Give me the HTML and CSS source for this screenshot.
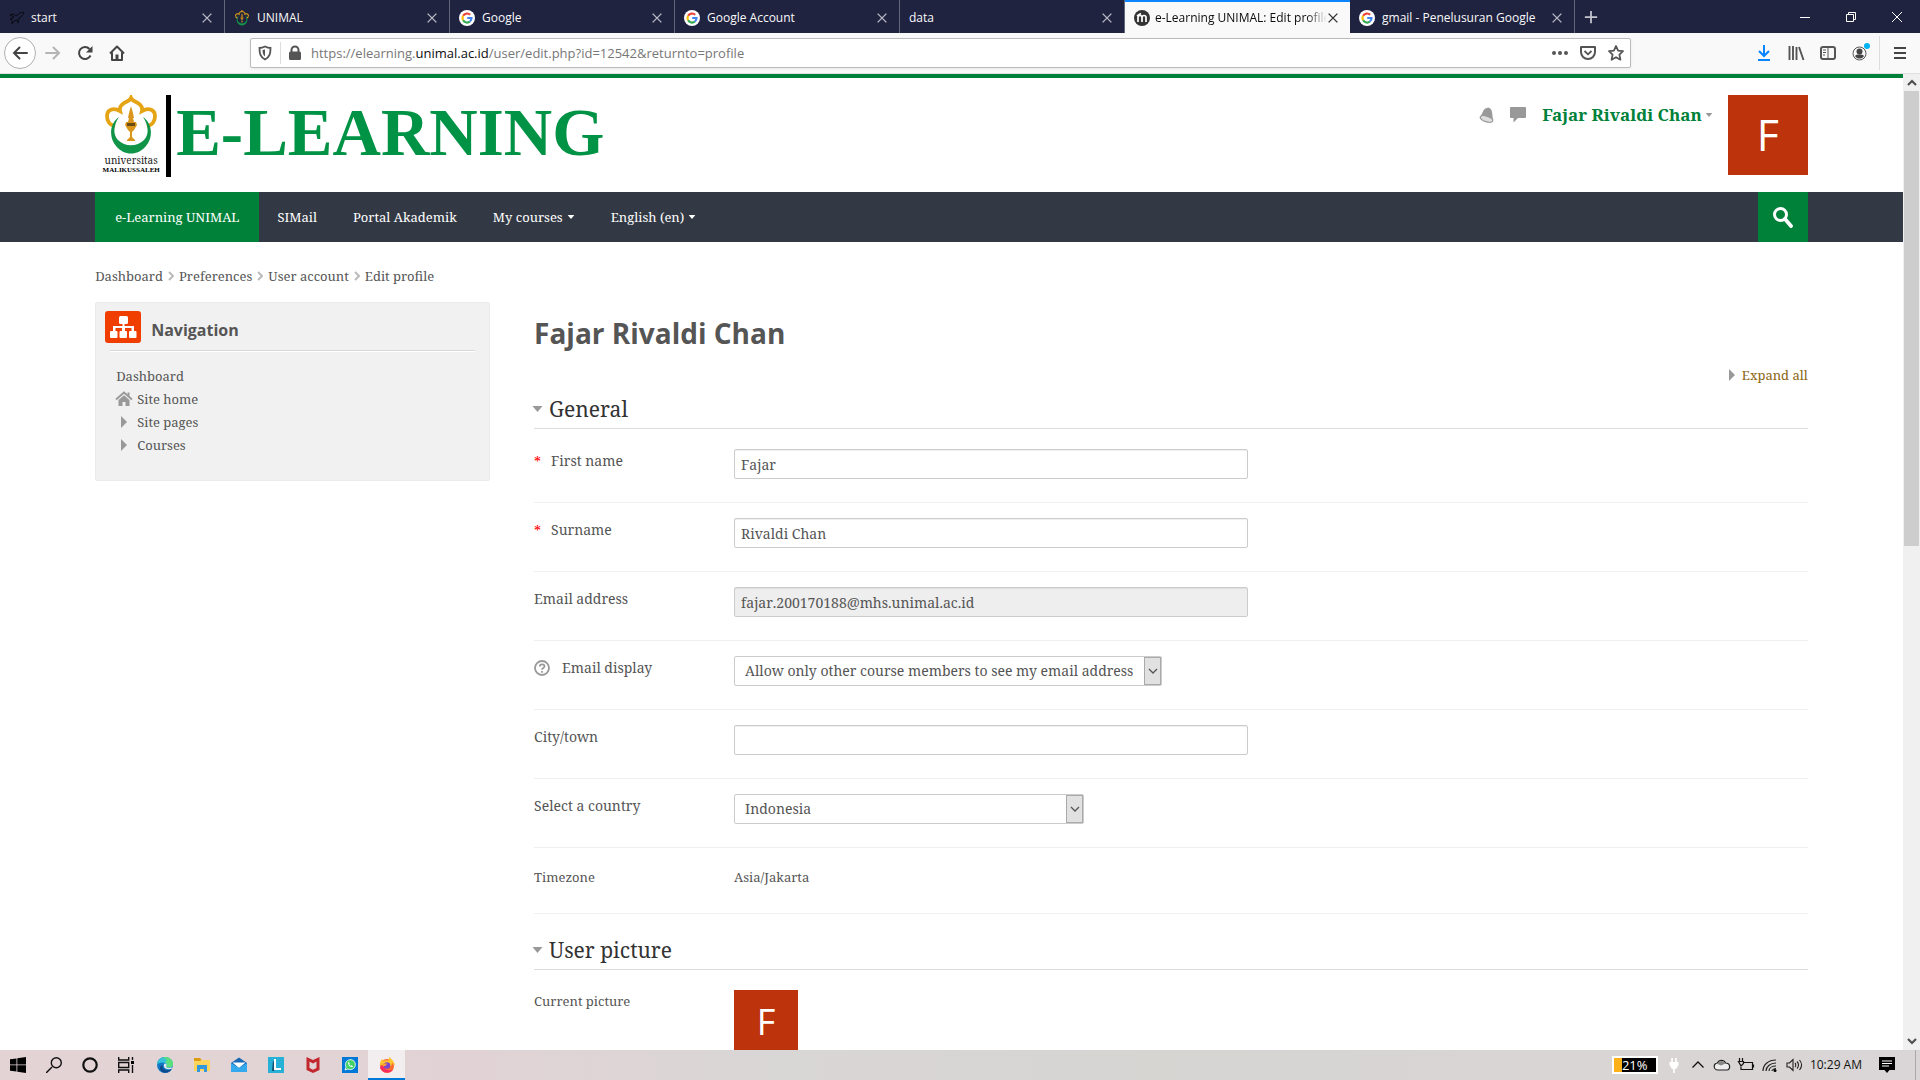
FILE: index.html
```html
<!DOCTYPE html>
<html lang="en">
<head>
<meta charset="utf-8">
<title>e-Learning UNIMAL: Edit profile</title>
<link rel="stylesheet" href="styles.css">
</head>
<body>
<svg class="defs" aria-hidden="true">
  <symbol id="close" viewBox="0 0 16 16"><path d="M3 3l10 10M13 3L3 13" fill="none" stroke="currentColor" stroke-width="1.6"/></symbol>
  <symbol id="google" viewBox="0 0 16 16"><circle cx="8" cy="8" r="8" fill="#fff"/><g fill="none" stroke-width="2.2"><path d="M11.2 4.8A4.5 4.5 0 0 0 4.1 5.8" stroke="#ea4335"/><path d="M4.1 5.8a4.5 4.5 0 0 0 0 4.5" stroke="#fbbc05"/><path d="M4.1 10.3a4.5 4.5 0 0 0 6.8 1.2" stroke="#34a853"/><path d="M10.9 11.5A4.4 4.4 0 0 0 12.5 8H8.2" stroke="#4285f4"/></g></symbol>
  <symbol id="emblem" viewBox="0 0 54 60">
    <path d="M11 31C5 30 3 25 3 21c0-6 6-9 13-5-1-4 1-6 4-8 3-1.500 6-2.500 7-5 1 2.500 4 3.500 7 5 3 2 5 4 4 8 7-4 13-1 13 5 0 4-2 9-8 10" fill="none" stroke="#e5a413" stroke-width="3.800"/>
    <path d="M15 22C5 29 5 43 12 51c8 10 22 10 30 0 7-8 7-22-3-29 6 9 6 18 1 23-7 7-19 7-26 0-5-5-5-14 1-23z" fill="#109447"/>
    <path d="M27 11l2 7 1 5h-1l1 4h2l1 3-3 5-2 2v5l3 3v1h-8v-1l3-3v-5l-2-2-3-5 1-3h2l1-4h-1l1-5z" fill="#d9961b"/>
    <path d="M23 28h8v3h-8z" fill="#694b17"/>
  </symbol>
  <symbol id="down" viewBox="0 0 10 6"><path d="M0 0h10L5 6z" fill="currentColor"/></symbol>
  <symbol id="right" viewBox="0 0 6 12"><path d="M0 0l6 6-6 6z" fill="currentColor"/></symbol>
  <symbol id="chev" viewBox="0 0 10 10"><path d="M1 3l4 4 4-4" fill="none" stroke="currentColor" stroke-width="1.300"/></symbol>
  <symbol id="bold-chev" viewBox="0 0 10 10"><path d="M1 3l4 4 4-4" fill="none" stroke="currentColor" stroke-width="2.200"/></symbol>
  <symbol id="sep" viewBox="0 0 6 10"><path d="M1 1l4 4-4 4" fill="none" stroke="#bbb" stroke-width="2"/></symbol>
</svg>

<div class="browser">
  <div class="tabs">
    <div class="tab tab-first"><svg class="fav" viewBox="0 0 16 16"><path d="M1 5l3-1 3 2 4-3 3-1 1 1-3 4-2 1-1 5-1-3-3 1-2 3v-4l-2-1 3-1 1-1z" fill="none" stroke="#090a12"/></svg><span class="tab-title">start</span><button class="tab-close" aria-label="Close tab"><svg><use href="#close"/></svg></button></div>
    <div class="tab"><svg class="fav"><use href="#emblem"/></svg><span class="tab-title">UNIMAL</span><button class="tab-close" aria-label="Close tab"><svg><use href="#close"/></svg></button></div>
    <div class="tab"><svg class="fav"><use href="#google"/></svg><span class="tab-title">Google</span><button class="tab-close" aria-label="Close tab"><svg><use href="#close"/></svg></button></div>
    <div class="tab"><svg class="fav"><use href="#google"/></svg><span class="tab-title">Google Account</span><button class="tab-close" aria-label="Close tab"><svg><use href="#close"/></svg></button></div>
    <div class="tab"><span class="tab-title">data</span><button class="tab-close" aria-label="Close tab"><svg><use href="#close"/></svg></button></div>
    <div class="tab tab-active"><svg class="fav" viewBox="0 0 16 16"><circle cx="8" cy="8" r="8" fill="#333"/><path d="M4 12V7.500a2 2 0 0 1 4 0V12M8 7.500a2 2 0 0 1 4 0V12M3 6l4-2.500" fill="none" stroke="#fff" stroke-width="1.700"/></svg><span class="tab-title">e-Learning UNIMAL: Edit profile</span><button class="tab-close" aria-label="Close tab"><svg><use href="#close"/></svg></button></div>
    <div class="tab"><svg class="fav"><use href="#google"/></svg><span class="tab-title">gmail - Penelusuran Google</span><button class="tab-close" aria-label="Close tab"><svg><use href="#close"/></svg></button></div>
    <button class="new-tab" aria-label="New tab"><svg viewBox="0 0 16 16"><path d="M8 1v14M1 8h14" stroke="currentColor" stroke-width="2"/></svg></button>
    <div class="window-buttons">
      <button aria-label="Minimize"><svg viewBox="0 0 12 12"><path d="M1 6.500h10" stroke="#fff"/></svg></button>
      <button aria-label="Restore"><svg viewBox="0 0 12 12"><path d="M1.500 3.500h7v7h-7zM3.500 3V1.500h7v7H9" fill="none" stroke="#fff"/></svg></button>
      <button aria-label="Close"><svg viewBox="0 0 12 12"><path d="M1 1l10 10M11 1L1 11" stroke="#fff"/></svg></button>
    </div>
  </div>
  <div class="toolbar">
    <button class="tool back" aria-label="Back"><svg viewBox="0 0 16 16"><path d="M15 8H2M7.500 2.500L2 8l5.500 5.500" fill="none" stroke="#444" stroke-width="2" stroke-linecap="round"/></svg></button>
    <button class="tool" aria-label="Forward"><svg viewBox="0 0 16 16"><path d="M1 8h13M8.500 2.500L14 8l-5.500 5.500" fill="none" stroke="#b5b5b5" stroke-width="2" stroke-linecap="round"/></svg></button>
    <button class="tool" aria-label="Reload"><svg viewBox="0 0 16 16"><path d="M13.500 10.500A6 6 0 1 1 12.500 4" fill="none" stroke="#444" stroke-width="2"/><path d="M15.500 1v6.500H9z" fill="#444"/></svg></button>
    <button class="tool" aria-label="Home"><svg viewBox="0 0 16 16"><path d="M1 8.500L8 1.500l7 7M3 7.500V15h10V7.500" fill="none" stroke="#444" stroke-width="2" stroke-linejoin="round"/><path d="M6.500 15V9.500h3V15z" fill="#444"/></svg></button>
    <div class="address">
      <svg class="i16" viewBox="0 0 16 16"><path d="M8 1.500C6 2.500 4 3 2.500 3c0 5 .5 9 5.500 11.500C13 12 13.500 8 13.500 3 12 3 10 2.500 8 1.500z" fill="none" stroke="#555" stroke-width="1.800"/><path d="M8 4.500v7C6 10 5.500 8 5.500 5z" fill="#555"/></svg>
      <span class="divider"></span>
      <svg class="i16" viewBox="0 0 16 16"><path d="M4.500 7V5a3.500 3.500 0 0 1 7 0v2" fill="none" stroke="#555" stroke-width="2"/><rect x="2" y="6.500" width="12" height="8.500" rx="1.500" fill="#555"/></svg>
      <span class="url">https://elearning.<b>unimal.ac.id</b>/user/edit.php?id=12542&amp;returnto=profile</span>
      <svg class="i16" viewBox="0 0 16 16"><g fill="#555"><circle cx="2" cy="8" r="2"/><circle cx="8" cy="8" r="2"/><circle cx="14" cy="8" r="2"/></g></svg>
      <svg class="i16" viewBox="0 0 16 16"><path d="M1 2h14v5a7 7 0 0 1-14 0z" fill="none" stroke="#555" stroke-width="2" stroke-linejoin="round"/><path d="M4.500 6L8 9.300 11.500 6" fill="none" stroke="#555" stroke-width="1.800"/></svg>
      <svg class="i16" viewBox="0 0 16 16"><path d="M8 1l2.100 4.600 4.900.6-3.600 3.400 1 5.100L8 12.200l-4.400 2.500 1-5.100L1 6.200l4.900-.6z" fill="none" stroke="#555" stroke-width="1.800" stroke-linejoin="round"/></svg>
    </div>
    <div class="tools-right">
      <svg class="i16" viewBox="0 0 16 16"><path d="M8 0v11M3 6l5 5 5-5M2 15h12" fill="none" stroke="#0a84ff" stroke-width="2"/></svg>
      <svg class="i16" viewBox="0 0 16 16"><path d="M1.500 1v14M5 1v14M8.500 2v13M11 2l4.500 13" fill="none" stroke="#555" stroke-width="1.900"/></svg>
      <svg class="i16" viewBox="0 0 16 16"><rect x="1" y="2" width="14" height="12" rx="2" fill="none" stroke="#555" stroke-width="2"/><path d="M8 2v12M3 5h3M3 7.500h3M3 10h2" stroke="#555"/></svg>
      <svg class="i16" viewBox="0 0 16 16"><circle cx="7.500" cy="8.500" r="6.500" fill="none" stroke="#555"/><circle cx="7.500" cy="6.500" r="3" fill="#444"/><path d="M3 11c1-1.500 2-1.500 4.500-1.500S11 9.500 12 11c-1 2-3 2.500-4.500 2.500S4 13 3 11z" fill="#444"/><circle cx="15" cy="1" r="3" fill="#00b3f4"/></svg>
      <span class="divider tall"></span>
      <svg class="i16" viewBox="0 0 16 16"><path d="M2 3h12M2 8h12M2 13h12" stroke="#444" stroke-width="2"/></svg>
    </div>
  </div>
</div>

<div class="viewport">
  <div class="page">
    <header class="site-header wrap">
      <a class="logo" href="#"><span class="crest"><svg><use href="#emblem"/></svg><span class="crest-a">universitas</span><span class="crest-b">MALIKUSSALEH</span></span><span class="logo-text">E-LEARNING</span></a>
      <div class="user">
        <svg class="i16" viewBox="0 0 16 16"><path d="M1 10.500C5 8 4 2 9 1c1-1 2-.5 2.300 0C15 2.500 14 8 15 13c-1-1-3-3-6-3.500-3-.5-6 0-8 1z" fill="#999"/><ellipse cx="8.500" cy="12" rx="6.500" ry="2.800" transform="rotate(17 8.500 12)" fill="#ddd" stroke="#999" stroke-width="1.200"/></svg>
        <svg class="i16" viewBox="0 0 16 16"><path d="M1 0h14a1 1 0 0 1 1 1v9a1 1 0 0 1-1 1H8l-4.500 4.500V11H1a1 1 0 0 1-1-1V1a1 1 0 0 1 1-1z" fill="#999"/></svg>
        <a class="user-name" href="#">Fajar Rivaldi Chan<svg class="caret"><use href="#down"/></svg></a>
      </div>
      <div class="avatar">F</div>
    </header>
    <nav class="navbar"><div class="wrap nav-row">
      <a class="home" href="#">e-Learning UNIMAL</a><a href="#">SIMail</a><a href="#">Portal Akademik</a><a href="#">My courses<svg class="caret"><use href="#down"/></svg></a><a href="#">English (en)<svg class="caret"><use href="#down"/></svg></a>
      <button class="search" aria-label="Search"><svg viewBox="0 0 22 22"><circle cx="8.500" cy="8.500" r="6" fill="none" stroke="#fff" stroke-width="3"/><path d="M13 13l6 7" stroke="#fff" stroke-width="3.800" stroke-linecap="round"/></svg></button>
    </div></nav>
    <div class="wrap">
      <nav class="crumbs"><a href="#">Dashboard</a><svg><use href="#sep"/></svg><a href="#">Preferences</a><svg><use href="#sep"/></svg><a href="#">User account</a><svg><use href="#sep"/></svg><a href="#">Edit profile</a></nav>
      <div class="columns">
        <aside class="block">
          <h2><svg viewBox="0 0 36 32"><rect width="36" height="32" rx="3" fill="#ef3e00"/><g fill="#fff"><rect x="14" y="5" width="9" height="8" rx="1.500"/><path d="M17.500 12h2v3h9v2h-20v-2h9z"/><path d="M8 15h2.500v5H8zM17 15h3v5h-3zM26.500 15H29v5h-2.500z"/><rect x="5" y="20" width="7.500" height="7" rx="1"/><rect x="14.500" y="20" width="7.500" height="7" rx="1"/><rect x="24" y="20" width="7.500" height="7" rx="1"/></g></svg>Navigation</h2>
          <ul>
            <li><a href="#">Dashboard</a></li>
            <li><span class="tree-icon"><svg class="i16" viewBox="0 0 16 16"><path d="M0 8.500L8 1.500l8 7" fill="none" stroke="#999" stroke-width="1.800"/><path d="M11.500 1.500h2v4l-2-1.700zM2.500 9L8 4.300 13.500 9v6H9.500v-4h-3v4h-4z" fill="#999"/></svg></span><a href="#">Site home</a></li>
            <li><span class="tree-icon"><svg class="arrow"><use href="#right"/></svg></span><a href="#">Site pages</a></li>
            <li><span class="tree-icon"><svg class="arrow"><use href="#right"/></svg></span><a href="#">Courses</a></li>
          </ul>
        </aside>
        <main>
          <h1>Fajar Rivaldi Chan</h1>
          <div class="expand"><a href="#"><svg class="arrow"><use href="#right"/></svg>Expand all</a></div>
          <form>
            <h3><svg class="toggle"><use href="#down"/></svg>General</h3>
            <div class="row first"><label for="fn"><span class="req">*</span>First name</label><input id="fn" type="text" value="Fajar"></div>
            <div class="row"><label for="sn"><span class="req">*</span>Surname</label><input id="sn" type="text" value="Rivaldi Chan"></div>
            <div class="row"><label for="em">Email address</label><input id="em" type="text" value="fajar.200170188@mhs.unimal.ac.id" readonly></div>
            <div class="row"><label for="ed"><svg class="help" viewBox="0 0 16 16"><circle cx="8" cy="8" r="7" fill="none" stroke="#999" stroke-width="1.800"/><path d="M5.800 6.500C5.800 3.500 10.500 3.700 10.500 6.300 10.500 8 8 8 8 9.700M8 11v1.800" fill="none" stroke="#999" stroke-width="1.800"/></svg>Email display</label><div class="select wide"><select id="ed"><option>Allow only other course members to see my email address</option></select><span><svg><use href="#chev"/></svg></span></div></div>
            <div class="row"><label for="ct">City/town</label><input id="ct" type="text"></div>
            <div class="row"><label for="co">Select a country</label><div class="select"><select id="co"><option>Indonesia</option></select><span><svg><use href="#chev"/></svg></span></div></div>
            <div class="row static"><span class="label">Timezone</span><span class="label">Asia/Jakarta</span></div>
            <h3 class="second"><svg class="toggle"><use href="#down"/></svg>User picture</h3>
            <div class="row picture"><span class="label">Current picture</span><div class="avatar small">F</div></div>
          </form>
        </main>
      </div>
    </div>
  </div>
  <div class="scrollbar"><svg class="up"><use href="#bold-chev"/></svg><div class="thumb"></div><svg class="end"><use href="#bold-chev"/></svg></div>
</div>

<footer class="taskbar">
  <button aria-label="Start"><svg viewBox="0 0 16 16"><path d="M0 2.300l6.500-.9v6.100H0zM7.300 1.300L16 0v7.500H7.300zM0 8.300h6.500v6.300L0 13.700zM7.300 8.300H16V16l-8.700-1.300z"/></svg></button>
  <button aria-label="Search"><svg viewBox="0 0 16 16"><path d="M0 16l6-6" stroke="#111" stroke-width="1.500"/><circle cx="10.300" cy="5.700" r="5" fill="none" stroke="#111" stroke-width="1.400"/></svg></button>
  <button aria-label="Cortana"><svg viewBox="0 0 16 16"><circle cx="8" cy="8" r="6.700" fill="none" stroke="#111" stroke-width="2.200"/></svg></button>
  <button aria-label="Task view"><svg viewBox="0 0 16 16"><path d="M.7 0v3h10V0M.7 16v-3h10v3M.7 5.500h10v5H.7zM14.500 0v3M14.500 8v8" fill="none" stroke="#111" stroke-width="1.400"/><path d="M13 4h3v3h-3z"/></svg></button>
  <div class="apps">
  <button class="app" aria-label="Edge"><svg viewBox="0 0 16 16"><circle cx="8" cy="8" r="8" fill="#1176c4"/><path d="M0 7C1-1 11-2 15 4c3 5-2 8-6 6 1-1 1-3-1-4C5 4.500 1 6 0 8z" fill="#35c1d8"/><path d="M8 0c6 0 9 5 8 8-1 3-5 3-7 2 2-2 1-4-1-5 3-1 2-4-3-4z" fill="#5dde7d"/><path d="M5.500 8C5 13 10 14 14.500 12.500 12 16 7 17 4 14 2 11 3 8.500 5.500 8z" fill="#0c4a8c"/><path d="M8 6.500c2 0 2 2 1 3.500 2 1.500 5 1 6.500 0l.3 1c-4 2.500-9 1-9-2 0-1.500.5-2.300 1.200-2.500z" fill="#e3e9ee"/></svg></button>
  <button class="app" aria-label="Explorer"><svg viewBox="0 0 16 16"><path d="M0 1h6l1.500 2H16v11H0z" fill="#ffd45d"/><path d="M0 1h6l1.500 2L6 4H0z" fill="#dc9b12"/><path d="M3 8h10v7h-3v-3H6v3H3z" fill="#3297dd"/></svg></button>
  <button class="app" aria-label="Mail"><svg viewBox="0 0 16 16"><path d="M0 6l8-5.500L16 6v9H0z" fill="#1769b5"/><path d="M1.500 5.500h13L8 11z" fill="#fff"/><path d="M0 6l8 5 8-5v9H0z" fill="#35a9ed"/></svg></button>
  <button class="app" aria-label="L"><svg viewBox="0 0 16 16"><path d="M0 0h16v16H0z" fill="#27b1d6"/><path d="M5 3l-1 11h2l2-3z" fill="#125275"/><path d="M6 2h2v9h5v2H6z" fill="#fff"/></svg></button>
  <button class="app" aria-label="McAfee"><svg viewBox="0 0 16 16"><path d="M1.500 0L8 3l6.500-3v13L8 16l-6.500-3zM4.500 4.500v6.500L8 12.700l3.500-1.700V4.500L8 6.500z" fill="#c1272d" fill-rule="evenodd"/></svg></button>
  <button class="app" aria-label="WhatsApp"><svg viewBox="0 0 16 16"><path d="M0 0h16v16H0z" fill="#0078d7"/><path d="M3 13l1-3a5 5 0 1 1 2 2z" fill="#42d366" stroke="#fff" stroke-width=".8"/><path d="M6 5.500c0 3 2 4.500 4.300 4.800l.7-1-1.500-1-.8.600L7.200 7.500l.4-1L7 5z" fill="#fff"/></svg></button>
  <button class="app current" aria-label="Firefox"><svg viewBox="0 0 16 16"><circle cx="8" cy="9" r="7" fill="#ff6b2c"/><path d="M1 8c0-3 1-5 2-6l1 2c2-1 4-1 5 0C9 2 10 1 11 0c1 3 5 4 5 9-1-2-2-3-3-3 0 5-6 6-9 2z" fill="#ffc52e"/><path d="M1 10c1 5 8 8 13 3-4 1-9 0-10-5z" fill="#f72d62"/><circle cx="8" cy="8.500" r="3.300" fill="#7946cf"/><path d="M3 6.500h5l-1 2-3 1z" fill="#ffa22b"/></svg></button>
  </div>
  <div class="tray">
    <span class="battery">21%</span>
    <svg class="i16" viewBox="0 0 16 16"><path d="M6 1v4M10 1v4M8 11v5" stroke="#fff" stroke-width="1.600"/><path d="M3.500 5h9v3L10 12H6L3.500 8z" fill="#fff"/></svg>
    <svg class="i16" viewBox="0 0 16 16"><path d="M2.500 10.500L8 5l5.500 5.500" fill="none" stroke="#111" stroke-width="1.300"/></svg>
    <svg class="i16" viewBox="0 0 16 16"><path d="M4 13a3.500 3.500 0 0 1-.5-7C5 2.500 10 2.500 11.500 6 17 6 16.500 13 13 13z" fill="#eee" stroke="#222" stroke-width="1.200"/><path d="M3.500 7C5 3 10 3 11.500 6.500L7 8.500z" fill="#888"/></svg>
    <svg class="i16" viewBox="0 0 16 16"><path d="M5 5.500h9.500v7H5M15.500 7.500v3M1.500 1v3M4.500 1v3M.5 4.500h5v2L3 9zM3 8v4.500h2" fill="none" stroke="#111" stroke-width="1.200"/></svg>
    <svg class="i16" viewBox="0 0 16 16"><g fill="none" stroke="#222" stroke-width="1.200"><path d="M1 14C1 8 6 3 14 3M4 14c0-4 4-8 10-8M7 14c0-3 3-5 7-5M10 14c0-1 2-2.500 4-2.500"/></g><circle cx="13" cy="13.500" r="1.500"/></svg>
    <svg class="i16" viewBox="0 0 16 16"><path d="M1 6h2.500L7 2.500v11L3.500 10H1zM9 6c1 1 1 3 0 4M11 4.500c2 2 2 5 0 7M13.500 3c2.500 3 2.500 7 0 10" fill="none" stroke="#222" stroke-width="1.100"/></svg>
    <span class="clock">10:29 AM</span>
    <svg class="i16 notice" viewBox="0 0 16 16"><path d="M0 0h16v13H10.500L8 16l-2.500-3H0z"/><path d="M3 4h10M3 6.500h10M3 9h7" stroke="#fff"/></svg>
  </div>
  <span class="show-desktop"></span>
</footer>
</body>
</html>
```
FILE: styles.css
```css
* { box-sizing: border-box; }
body { margin: 0; height: 100vh; display: flex; flex-direction: column; overflow: hidden; background: #fff; color: #555; font: 13px/20px "Noto Serif", "Liberation Serif", serif; }
a { color: inherit; text-decoration: none; }
button { padding: 0; border: 0; background: none; display: flex; align-items: center; justify-content: center; }
svg { display: block; flex: none; }
.defs { position: absolute; width: 0; height: 0; }
.i16 { width: 16px; height: 16px; overflow: visible; }
.wrap { width: 90%; margin: 0 auto; }

/* Browser chrome */
.browser { flex: none; font-family: "Open Sans", sans-serif; }
.tabs { display: flex; height: 33px; background: #202340; color: #f9f9fa; font-size: 12px; line-height: 22px; }
.tab { flex: 0 1 225px; min-width: 0; display: flex; align-items: center; gap: 7px; padding: 2px 10px 0 9px; border-right: 1px solid #63657a; white-space: nowrap; }
.tab-first { gap: 6px; }
.tab-active { gap: 5px; background: #f9f9f9; color: #0c0c0d; border-top: 2px solid #0a84ff; border-right: 0; padding-top: 0; }
.tab-title { flex: 1; min-width: 0; overflow: hidden; }
.tab-active .tab-title { mask-image: linear-gradient(to left, transparent, #000 20px); }
.fav { width: 16px; height: 16px; }
.tab-close { width: 14px; color: #b8b9c4; }
.tab-close svg { width: 14px; height: 14px; }
.tab-active .tab-close { margin-left: -6px; color: #333; }
.new-tab { width: 32px; color: #c5c6ce; }
.new-tab svg { width: 14px; height: 14px; }
.window-buttons { margin-left: auto; display: flex; }
.window-buttons button { width: 46px; }
.window-buttons svg { width: 12px; height: 12px; }
.toolbar { display: flex; align-items: center; height: 41px; padding: 0 12px 0 4px; background: #f9f9f9; border-bottom: 1px solid #e0e0e1; }
.tool { width: 32px; height: 32px; }
.tool svg { width: 16px; height: 16px; }
.back { margin-right: 1px; border: 1px solid #b0b0b0; border-radius: 50%; background: #fff; }
.address { flex: 0 1 1381px; margin-left: 117px; height: 30px; display: flex; align-items: center; gap: 12px; padding: 0 6px; border: 1px solid #bbb; border-radius: 2px; background: #fff; font-size: 13px; color: #777; box-shadow: 0 1px 3px #0001; }
.address .divider { margin: 0 -6px 0 -5px; }
.url { flex: 1; margin-left: -4px; }
.url b { font-weight: 400; color: #0c0c0d; }
.divider { width: 1px; height: 22px; background: #ddd; }
.divider.tall { height: 34px; margin: 0 -4px 0 -5px; }
.tools-right { margin-left: auto; display: flex; align-items: center; gap: 16px; }

/* Page */
.viewport { flex: 1; min-height: 0; display: flex; }
.page { flex: 1; min-width: 0; overflow: hidden; border-top: 4px solid #008139; }
.scrollbar { flex: none; width: 17px; background: #f0f0f0; color: #505050; display: flex; flex-direction: column; align-items: center; padding: 4px 1px; }
.scrollbar svg { width: 10px; height: 10px; }
.up { transform: rotate(180deg); }
.thumb { width: 15px; height: 47%; margin-top: 3px; background: #cdcdcd; }
.end { margin-top: auto; }
.site-header { display: flex; align-items: flex-start; height: 114px; padding-top: 17px; }
.logo { display: flex; height: 82px; margin-right: auto; padding-left: 7px; color: #009345; }
.crest { display: flex; flex-direction: column; align-items: center; width: 69px; padding-right: 6px; border-right: 5px solid #000; color: #222; line-height: 9px; }
.crest svg { width: 54px; height: 60px; }
.crest-a { font-size: 10px; line-height: 10px; }
.crest-b { font: bold 7px/10px "Liberation Serif", serif; color: #000; }
.logo-text { padding-left: 5px; font: bold 67px/74px "Liberation Serif", serif; }
.user { display: flex; align-items: center; gap: 16px; height: 40px; margin-right: 15px; }
.user-name { display: flex; align-items: center; gap: 3px; font-size: 17px; font-weight: 700; color: #008139; }
.caret { width: 8px; height: 4px; }
.user-name .caret { color: #999; }
.avatar { width: 80px; height: 80px; background: #bd330b; color: #fff; font: 43px/80px "Open Sans", sans-serif; text-align: center; }
.avatar.small { width: 64px; height: 64px; font-size: 36px; line-height: 64px; }
.navbar { background: #333944; color: #fff; }
.nav-row { display: flex; height: 50px; }
.nav-row a { display: flex; align-items: center; gap: 4px; padding: 0 18px; }
.nav-row .home { padding: 0 20px; background: #008139; }
.search { width: 50px; margin-left: auto; background: #008139; }
.search svg { width: 22px; height: 22px; }
.crumbs { display: flex; align-items: center; gap: 5px; padding-top: 24px; }
.crumbs svg { width: 6px; height: 10px; }
.columns { display: grid; grid-template-columns: 395fr 1274fr; gap: 44px; align-items: start; margin-top: 16px; }
.block { background: #f1f1f1; border: 1px solid #ebebeb; border-radius: 2px; padding: 8px 14px 24px 9px; }
.block h2 { display: flex; gap: 10px; margin: 0 0 0 5px; height: 40px; border-bottom: 1px solid #d8d8d8; box-shadow: 0 1px #fff; font: bold 16px/38px "Open Sans", sans-serif; }
.block h2 svg { width: 36px; height: 32px; margin-left: -5px; }
.block ul { margin: 0; padding: 13px 0 0 11px; list-style: none; }
.block li { display: flex; align-items: center; gap: 5px; height: 23px; }
.tree-icon { width: 16px; display: flex; justify-content: center; color: #999; }
.arrow { width: 6px; height: 12px; }
h1 { margin: 11px 0 0; font: bold 28px/40px "Open Sans", sans-serif; }
.expand { display: flex; justify-content: flex-end; margin-top: 12px; color: #8c6510; }
.expand a { display: flex; align-items: center; gap: 7px; }
.expand .arrow { color: #999; }
h3 { display: flex; align-items: center; gap: 6px; margin: 5px 0 0 -2px; height: 38px; font-size: 21px; font-weight: 400; line-height: 30px; color: #333; }
.toggle { width: 11px; height: 6px; color: #999; }
form { display: flex; flex-direction: column; }
.row { display: grid; grid-template-columns: 200px 1fr; min-height: 69px; padding-top: 15px; border-bottom: 1px solid #f0f0f0; font-size: 14px; align-items: start; }
.row.first { min-height: 75px; padding-top: 20px; border-top: 1px solid #ddd; }
label { display: flex; align-items: center; min-height: 24px; }
.req { width: 17px; padding-top: 2px; color: #f00; font-size: 14px; }
.help { width: 16px; height: 16px; margin-right: 12px; }
input, select { width: 100%; height: 30px; border: 1px solid #ccc; border-radius: 2px; background: #fff; color: #555; font: 14px/20px "Noto Serif", "Liberation Serif", serif; box-shadow: inset 0 1px 1px #0001; }
input { max-width: 514px; padding: 0 6px; font-kerning: none; }
input[readonly] { background: #eee; }
select { appearance: none; padding: 0 28px 0 10px; box-shadow: none; }
.select { position: relative; width: 350px; }
.select.wide { width: 428px; }
.select span { position: absolute; inset: 1px 1px 1px auto; width: 17px; display: flex; align-items: center; justify-content: center; border: 1px solid #aaa; background: #e1e1e1; pointer-events: none; }
.select svg { width: 10px; height: 10px; }
.row.static { min-height: 66px; padding-top: 18px; }
.label { font-size: 13px; line-height: 22px; }
h3.second { margin-top: 16px; height: 39px; }
.row.picture { padding-top: 20px; border-top: 1px solid #ddd; }

/* Taskbar */
.taskbar { flex: none; display: flex; height: 30px; background: linear-gradient(90deg, #e3d3d5, #e1d3d5 25%, #d9d6d6 40%, #d6d5d2 60%, #dad5d6); font-family: "Open Sans", sans-serif; color: #111; }
.taskbar button { width: 36px; }
.taskbar button svg { width: 16px; height: 16px; }
.apps { display: flex; margin-left: 2px; }
.apps .app { width: 37px; }
.taskbar .current { background: #f2edee; border-bottom: 2px solid #0078d7; padding-top: 2px; }
.tray { display: flex; align-items: center; gap: 8px; margin-left: auto; padding-right: 20px; }
.battery { width: 46px; height: 18px; padding-left: 8px; border: 2px solid #fff; background: linear-gradient(90deg, #fbb117 8px, #000 8px); color: #fff; font-size: 13px; line-height: 14px; }
.clock { font-size: 12px; }
.notice { margin-left: 9px; }
.show-desktop { width: 5px; border-left: 1px solid #aaa; }
```
